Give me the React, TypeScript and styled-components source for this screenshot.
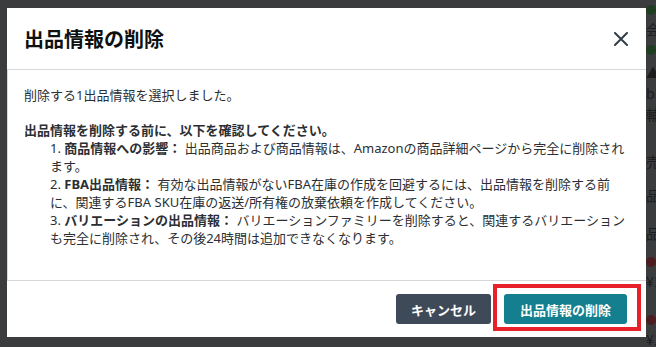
import React from "react";
import styled, { createGlobalStyle } from "styled-components";

const GlobalStyle = createGlobalStyle`
  html, body {
    margin: 0;
    padding: 0;
    background: #3b3c3e;
  }
  body {
    font-family: "Noto Sans", "Noto Sans CJK JP", sans-serif;
  }
`;

type PeekRow = { h: number; text?: string; dot?: string };

// page behind the overlay, only a sliver of it shows on the right
const peekRows: PeekRow[] = [
  { h: 20, dot: "#1f3d22" },
  { h: 18, text: "会" },
  { h: 24, dot: "#1f3d22" },
  { h: 20, text: "▲" },
  { h: 22, text: "bi" },
  { h: 20, text: "輔" },
  { h: 22, text: "" },
  { h: 30, text: "売" },
  { h: 38, text: "品" },
  { h: 38, text: "品" },
  { h: 20, dot: "#4d1c1f" },
  { h: 18, text: "¥1" },
  { h: 20, text: "" },
  { h: 20, dot: "#4d1c1f" },
  { h: 18, text: "¥1" },
];

function App() {
  return (
    <>
      <GlobalStyle />
      <Screen>
        <Modal role="dialog" aria-labelledby="delete-title">
          <Header>
            <Title id="delete-title">出品情報の削除</Title>
            <CloseButton aria-label="閉じる">
              <svg width="14" height="14" viewBox="0 0 14 14">
                <path
                  d="M1 1 13 13M13 1 1 13"
                  stroke="#333d47"
                  strokeWidth="2"
                  strokeLinecap="round"
                  fill="none"
                />
              </svg>
            </CloseButton>
          </Header>
          <Body>
            <Lead>削除する1出品情報を選択しました。</Lead>
            <Heading>出品情報を削除する前に、以下を確認してください。</Heading>
            <CheckList>
              <li>
                <b>商品情報への影響：</b> 出品商品および商品情報は、Amazonの商品詳細ページから完全に削除され
                <br />
                ます。
              </li>
              <li>
                <b>FBA出品情報：</b> 有効な出品情報がないFBA在庫の作成を回避するには、出品情報を削除する前
                <br />
                に、関連するFBA SKU在庫の返送/所有権の放棄依頼を作成してください。
              </li>
              <li>
                <b>バリエーションの出品情報：</b> バリエーションファミリーを削除すると、関連するバリエーション
                <br />
                も完全に削除され、その後24時間は追加できなくなります。
              </li>
            </CheckList>
          </Body>
          <Footer>
            <Button $variant="secondary">キャンセル</Button>
            <Highlight>
              <Button $variant="primary">出品情報の削除</Button>
            </Highlight>
          </Footer>
        </Modal>
        <Peek aria-hidden="true">
          {peekRows.map((row, i) => (
            <PeekLine key={i} $h={row.h}>
              {row.dot ? <PeekDot $color={row.dot} /> : row.text}
            </PeekLine>
          ))}
        </Peek>
      </Screen>
    </>
  );
}

const Screen = styled.div`
  width: 656px;
  height: 347px;
  box-sizing: border-box;
  padding-left: 7px;
  display: flex;
  align-items: flex-start;
  overflow: hidden;
  background: #3b3c3e;
`;
const Modal = styled.div`
  margin-top: 8px;
  width: 639px;
  height: 329px;
  flex-shrink: 0;
  background: #ffffff;
  display: flex;
  flex-direction: column;
`;
const Header = styled.div`
  height: 61px;
  flex-shrink: 0;
  display: flex;
  align-items: center;
  justify-content: space-between;
  padding: 0 18px 0 17px;
`;
const Title = styled.h2`
  margin: 0;
  font-family: "Noto Sans CJK JP", "Noto Sans", sans-serif;
  font-size: 20px;
  font-weight: 700;
  color: #0f1111;
  line-height: 1;
`;
const CloseButton = styled.button`
  width: 14px;
  height: 14px;
  padding: 0;
  border: none;
  background: none;
  display: flex;
  cursor: pointer;
`;
const Body = styled.div`
  flex: 1;
  border-top: 1px solid #d5d9d9;
  border-bottom: 1px solid #d5d9d9;
  border-left: 1px solid #d5d9d9;
  padding: 16px 16px 0 16px;
  font-family: "Noto Sans", "Noto Sans CJK JP", sans-serif;
  font-size: 13px;
  line-height: 18px;
  color: #2b2f33;
`;
const Lead = styled.p`
  margin: 0 0 17px;
`;
const Heading = styled.p`
  margin: 0;
  font-weight: 700;
`;
const CheckList = styled.ol`
  margin: 0;
  padding-left: 26px;
  list-style: decimal inside;
  white-space: nowrap;

  b {
    font-weight: 700;
  }
`;
const Footer = styled.div`
  height: 56px;
  flex-shrink: 0;
  display: flex;
  align-items: center;
  justify-content: flex-end;
  gap: 13px;
  padding: 0 19px;
`;
const Button = styled.button<{ $variant: "primary" | "secondary" }>`
  height: 30px;
  padding: 0 ${(p) => (p.$variant === "primary" ? "16px" : "15px")};
  border: none;
  border-radius: 3px;
  background: ${(p) => (p.$variant === "primary" ? "#14808f" : "#3f4a59")};
  color: #ffffff;
  font-family: "Noto Sans CJK JP", "Noto Sans", sans-serif;
  font-size: 13px;
  font-weight: 700;
  cursor: pointer;
`;
const Highlight = styled.div`
  position: relative;
  display: flex;

  &::after {
    content: "";
    position: absolute;
    inset: -10px -14px -7px -11px;
    border: 4px solid #e8202a;
    pointer-events: none;
  }
`;
const Peek = styled.div`
  width: 10px;
  flex-shrink: 0;
  display: flex;
  flex-direction: column;
  overflow: hidden;
  font-family: "Noto Sans CJK JP", sans-serif;
  font-size: 14px;
  color: #1c1d1f;
`;
const PeekLine = styled.div<{ $h: number }>`
  height: ${(p) => p.$h}px;
  flex-shrink: 0;
  display: flex;
  align-items: center;
  white-space: nowrap;
  line-height: 1;
`;
const PeekDot = styled.span<{ $color: string }>`
  width: 10px;
  height: 10px;
  border-radius: 50%;
  background: ${(p) => p.$color};
`;

export default App;
